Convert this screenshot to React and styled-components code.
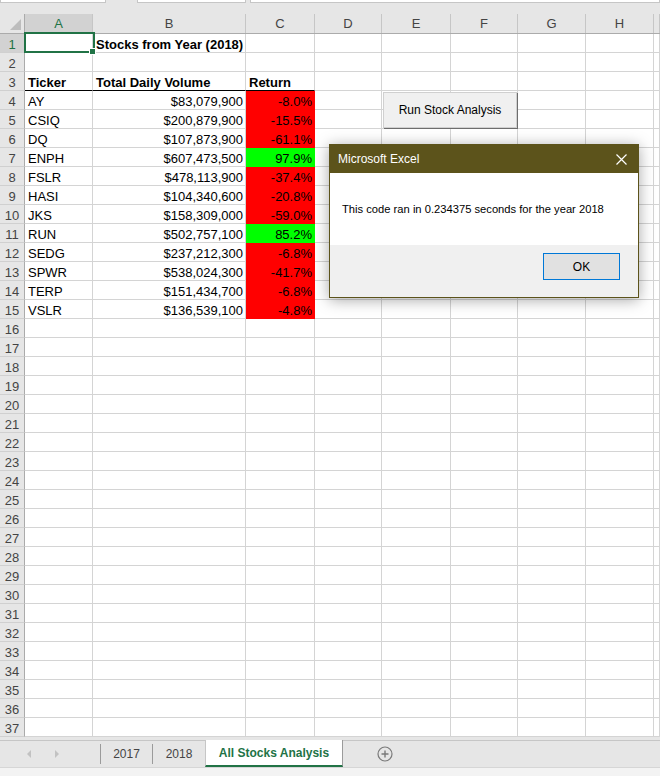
import React from "react";
import styled, { createGlobalStyle } from "styled-components";

const GREEN = "#217346";
const COLS = "25px 68px 153px 69px 67px 69px 67px 68px 68px 1fr";
const LETTERS = ["A", "B", "C", "D", "E", "F", "G", "H", ""];
const RED = "#ff0000";
const LIME = "#00ff00";

const stocks = [
  ["AY", "$83,079,900", "-8.0%"],
  ["CSIQ", "$200,879,900", "-15.5%"],
  ["DQ", "$107,873,900", "-61.1%"],
  ["ENPH", "$607,473,500", "97.9%"],
  ["FSLR", "$478,113,900", "-37.4%"],
  ["HASI", "$104,340,600", "-20.8%"],
  ["JKS", "$158,309,000", "-59.0%"],
  ["RUN", "$502,757,100", "85.2%"],
  ["SEDG", "$237,212,300", "-6.8%"],
  ["SPWR", "$538,024,300", "-41.7%"],
  ["TERP", "$151,434,700", "-6.8%"],
  ["VSLR", "$136,539,100", "-4.8%"],
];

const GlobalStyle = createGlobalStyle`
  html, body {
    margin: 0;
    padding: 0;
    overflow: hidden;
    background: #fff;
  }
  body {
    font-family: "Liberation Sans", Arial, sans-serif;
  }
`;

const Sheet = styled.div`
  position: relative;
  width: 660px;
  height: 776px;
  display: flex;
  flex-direction: column;
  background: #e6e6e6;
  overflow: hidden;
`;

const FormulaStrip = styled.div`
  display: flex;
  height: 4px;
  background: #e6e6e6;
`;

const FormulaBox = styled.div`
  box-sizing: border-box;
  height: 3px;
  width: ${(p) => (p.$width ? `${p.$width}px` : "auto")};
  flex: ${(p) => (p.$width ? "none" : 1)};
  margin-left: ${(p) => p.$offset || 0}px;
  background: #fff;
  border: 1px solid #c6c6c6;
  border-top: none;
`;

const ColumnHeader = styled.div`
  display: grid;
  grid-template-columns: ${COLS};
  align-items: end;
  height: 30px;
  box-sizing: border-box;
  background: #e6e6e6;
  border-bottom: 1px solid #ababab;
`;

const ColLetter = styled.div`
  height: 19px;
  line-height: 19px;
  box-sizing: border-box;
  text-align: center;
  font-size: 13px;
  color: ${(p) => (p.$active ? GREEN : "#444")};
  background: ${(p) => (p.$active ? "#d2d2d2" : "transparent")};
  border-right: 1px solid #c6c6c6;
`;

const Corner = styled.div`
  height: 19px;
  box-sizing: border-box;
  display: flex;
  align-items: flex-end;
  justify-content: flex-end;
  padding: 0 3px 3px 0;
  border-right: 1px solid #ababab;
`;

const Body = styled.div`
  display: grid;
  grid-template-columns: ${COLS};
  grid-auto-rows: 19px;
  background: #fff;
`;

const RowNum = styled.div`
  box-sizing: border-box;
  display: flex;
  align-items: flex-end;
  justify-content: center;
  padding-bottom: 1px;
  font-size: 13px;
  line-height: 12px;
  color: ${(p) => (p.$active ? GREEN : "#444")};
  background: ${(p) => (p.$active ? "#d2d2d2" : "#e6e6e6")};
  border-right: 1px solid #ababab;
  border-bottom: 1px solid #d0d0d0;
`;

const Cell = styled.div`
  box-sizing: border-box;
  display: flex;
  align-items: flex-end;
  justify-content: ${(p) => (p.$right ? "flex-end" : "flex-start")};
  padding: 0 2px 1px 3px;
  font-size: 13px;
  line-height: 12px;
  font-weight: ${(p) => (p.$bold ? 700 : 400)};
  white-space: nowrap;
  color: #000;
  background: ${(p) => p.$fill || "#fff"};
  border-right: 1px solid ${(p) => p.$fill || "#d4d4d4"};
  border-bottom: 1px solid
    ${(p) => (p.$rule ? "#000" : p.$fill || "#d4d4d4")};
`;

const Selection = styled.div`
  position: absolute;
  left: 24px;
  top: 32px;
  width: 71px;
  height: 21px;
  box-sizing: border-box;
  border: 2px solid ${GREEN};
  pointer-events: none;
`;

const FillHandle = styled.div`
  position: absolute;
  left: 63px;
  top: 14px;
  width: 5px;
  height: 5px;
  background: ${GREEN};
  border: 1px solid #fff;
`;

const MacroButton = styled.button`
  position: absolute;
  left: 383px;
  top: 92px;
  width: 134px;
  height: 36px;
  box-sizing: border-box;
  background: #f0f0f0;
  border: 1px solid #d0d0d0;
  box-shadow: 1px 1px 0 #6d6d6d;
  font-family: "Liberation Sans", Arial, sans-serif;
  font-size: 12px;
  color: #000;
  padding: 0;
`;

const Dialog = styled.div`
  position: absolute;
  left: 329px;
  top: 144px;
  width: 310px;
  height: 154px;
  box-sizing: border-box;
  display: flex;
  flex-direction: column;
  background: #f0f0f0;
  border: 1px solid #5c531b;
  box-shadow: 0 2px 14px rgba(0, 0, 0, 0.35);
`;

const TitleBar = styled.div`
  height: 28px;
  display: flex;
  align-items: center;
  justify-content: space-between;
  padding: 0 11px 0 8px;
  background: #5c531b;
  color: #fff;
  font-size: 12px;
`;

const DialogBody = styled.div`
  height: 72px;
  display: flex;
  align-items: center;
  padding-left: 12px;
  background: #fff;
  font-size: 11.2px;
  color: #000;
`;

const DialogFooter = styled.div`
  flex: 1;
  display: flex;
  justify-content: flex-end;
  align-items: flex-start;
  padding: 8px 18px 0 0;
`;

const OkButton = styled.button`
  width: 77px;
  height: 27px;
  box-sizing: border-box;
  background: #e1e1e1;
  border: 1px solid #0078d7;
  font-family: "Liberation Sans", Arial, sans-serif;
  font-size: 12px;
  color: #000;
  padding: 0;
`;

const Footer = styled.div`
  flex: 1;
  display: flex;
  flex-direction: column;
  background: #e6e6e6;
`;

const TabStrip = styled.div`
  margin-top: 3px;
  height: 26px;
  display: flex;
  align-items: stretch;
  border-top: 1px solid #c6c6c6;
`;

const NavArrows = styled.div`
  width: 100px;
  box-sizing: border-box;
  display: flex;
  align-items: center;
  gap: 22px;
  padding-left: 26px;
`;

const TabDivider = styled.span`
  align-self: flex-start;
  margin-top: 3px;
  width: 1px;
  height: 20px;
  background: #9b9b9b;
`;

const Tab = styled.div`
  width: ${(p) => p.$w}px;
  display: flex;
  align-items: center;
  justify-content: center;
  font-size: 12px;
  color: #444;
`;

const ActiveTab = styled.div`
  width: 138px;
  margin-top: -1px;
  box-sizing: border-box;
  display: flex;
  align-items: center;
  justify-content: center;
  background: #fff;
  border-left: 1px solid #c6c6c6;
  border-right: 1px solid #9b9b9b;
  border-bottom: 2px solid ${GREEN};
  font-size: 12px;
  font-weight: 700;
  color: ${GREEN};
`;

const AddSheet = styled.div`
  margin-left: 34px;
  display: flex;
  align-items: center;
`;

const StatusStrip = styled.div`
  flex: 1;
  background: #f3f3f3;
  border-top: 1px solid #d6d6d6;
`;

const Arrow = ({ dir }) => (
  <svg width="6" height="8" viewBox="0 0 6 8">
    <polygon
      points={dir === "left" ? "5,0 5,8 1,4" : "1,0 1,8 5,4"}
      fill="#c2c2c2"
    />
  </svg>
);

const cellsFor = (row) => {
  const blank = Array.from({ length: 6 }, (_, i) => <Cell key={`e${i}`} />);
  if (row === 1) {
    return [
      <Cell key="a" />,
      <Cell key="b" $bold>
        Stocks from Year (2018)
      </Cell>,
      <Cell key="c" />,
      ...blank,
    ];
  }
  if (row === 3) {
    return [
      <Cell key="a" $bold $rule>
        Ticker
      </Cell>,
      <Cell key="b" $bold $rule>
        Total Daily Volume
      </Cell>,
      <Cell key="c" $bold $rule>
        Return
      </Cell>,
      ...blank,
    ];
  }
  const stock = stocks[row - 4];
  if (stock) {
    const fill = stock[2].startsWith("-") ? RED : LIME;
    return [
      <Cell key="a">{stock[0]}</Cell>,
      <Cell key="b" $right>
        {stock[1]}
      </Cell>,
      <Cell key="c" $right $fill={fill}>
        {stock[2]}
      </Cell>,
      ...blank,
    ];
  }
  return [<Cell key="a" />, <Cell key="b" />, <Cell key="c" />, ...blank];
};

const rowNumbers = Array.from({ length: 37 }, (_, i) => i + 1);

export default function App() {
  return (
    <Sheet>
      <GlobalStyle />
      <FormulaStrip>
        <FormulaBox $width={106} />
        <FormulaBox $width={109} $offset={31} />
        <FormulaBox $offset={4} />
      </FormulaStrip>

      <ColumnHeader>
        <Corner>
          <svg width="11" height="11" viewBox="0 0 11 11">
            <polygon points="11,0 11,11 0,11" fill="#bdbdbd" />
          </svg>
        </Corner>
        {LETTERS.map((l, i) => (
          <ColLetter key={i} $active={l === "A"}>
            {l}
          </ColLetter>
        ))}
      </ColumnHeader>

      <Body>
        {rowNumbers.map((row) => (
          <React.Fragment key={row}>
            <RowNum $active={row === 1}>{row}</RowNum>
            {cellsFor(row)}
          </React.Fragment>
        ))}
      </Body>

      <Footer>
        <TabStrip>
          <NavArrows>
            <Arrow dir="left" />
            <Arrow dir="right" />
          </NavArrows>
          <TabDivider />
          <Tab $w={51}>2017</Tab>
          <TabDivider />
          <Tab $w={52}>2018</Tab>
          <ActiveTab>All Stocks Analysis</ActiveTab>
          <AddSheet>
            <svg width="16" height="16" viewBox="0 0 16 16">
              <circle cx="8" cy="8" r="7" fill="none" stroke="#7a7a7a" strokeWidth="1.2" />
              <path d="M8 4.5v7M4.5 8h7" stroke="#7a7a7a" strokeWidth="1.4" />
            </svg>
          </AddSheet>
        </TabStrip>
        <StatusStrip />
      </Footer>

      <Selection>
        <FillHandle />
      </Selection>

      <MacroButton>Run Stock Analysis</MacroButton>

      <Dialog>
        <TitleBar>
          <span>Microsoft Excel</span>
          <svg width="11" height="11" viewBox="0 0 11 11">
            <path d="M0.5 0.5l10 10M10.5 0.5l-10 10" stroke="#fff" strokeWidth="1.2" />
          </svg>
        </TitleBar>
        <DialogBody>This code ran in 0.234375 seconds for the year 2018</DialogBody>
        <DialogFooter>
          <OkButton>OK</OkButton>
        </DialogFooter>
      </Dialog>
    </Sheet>
  );
}
